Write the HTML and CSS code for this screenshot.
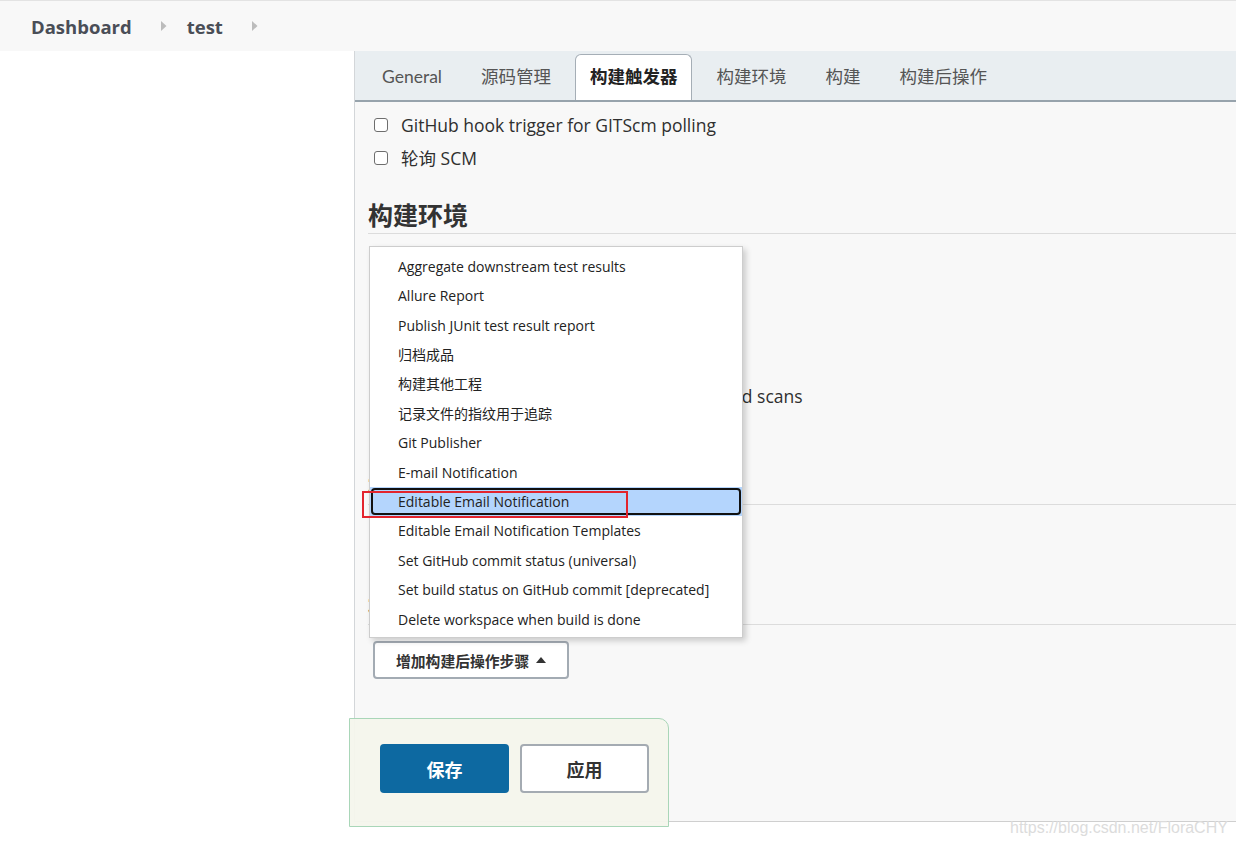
FILE: index.html
```html
<!DOCTYPE html>
<html lang="zh-CN">
<head>
  <meta charset="UTF-8">
  <meta name="viewport" content="width=device-width, initial-scale=1.0">
  <title>test Config [Jenkins]</title>
  <link rel="stylesheet" href="styles.css">
</head>
<body>
  <header class="breadcrumbs">
    <a class="crumb" href="#">Dashboard</a>
    <span class="crumb-arrow"><svg width="6" height="10" viewBox="0 0 6 10"><path d="M0 0 L5.5 5 L0 10 Z" fill="#bcbcbc"/></svg></span>
    <a class="crumb" href="#">test</a>
    <span class="crumb-arrow"><svg width="6" height="10" viewBox="0 0 6 10"><path d="M0 0 L5.5 5 L0 10 Z" fill="#bcbcbc"/></svg></span>
  </header>

  <div class="page">
    <aside class="side-panel"></aside>

    <main class="config-panel">
      <nav class="tabs">
        <a class="tab" href="#">General</a>
        <a class="tab" href="#">源码管理</a>
        <a class="tab active" href="#">构建触发器</a>
        <a class="tab" href="#">构建环境</a>
        <a class="tab" href="#">构建</a>
        <a class="tab" href="#">构建后操作</a>
      </nav>

      <div class="config-body">
        <!-- 构建触发器 -->
        <div class="option-row"><input type="checkbox"><label>GitHub hook trigger for GITScm polling</label></div>
        <div class="option-row"><input type="checkbox"><label>轮询 SCM</label></div>

        <section class="section">
          <h2 class="section-title">构建环境</h2>
          <div class="options">
            <div class="option-row"><input type="checkbox"><label>Delete workspace before build starts</label></div>
            <div class="option-row"><input type="checkbox"><label>Use secret text(s) or file(s)</label></div>
            <div class="option-row"><input type="checkbox"><label>Abort the build if it's stuck</label></div>
            <div class="option-row"><input type="checkbox"><label>Add timestamps to the Console Output</label></div>
            <div class="option-row"><input type="checkbox"><label>Inspect build log for published Gradle build scans</label></div>
            <div class="option-row"><input type="checkbox"><label>With Ant</label></div>
          </div>
        </section>

        <section class="section">
          <h2 class="section-title">构建</h2>
          <div class="dropdown">
            <button class="add-step" type="button">增加构建步骤
              <svg width="10" height="6" viewBox="0 0 10 6"><path d="M0 0 L10 0 L5 6 Z" fill="#333"/></svg>
            </button>
          </div>
        </section>

        <section class="section">
          <h2 class="section-title">构建后操作</h2>
          <div class="dropdown">
            <ul class="dropdown-menu">
              <li>Aggregate downstream test results</li>
              <li>Allure Report</li>
              <li>Publish JUnit test result report</li>
              <li>归档成品</li>
              <li>构建其他工程</li>
              <li>记录文件的指纹用于追踪</li>
              <li>Git Publisher</li>
              <li>E-mail Notification</li>
              <li class="selected">Editable Email Notification</li>
              <li>Editable Email Notification Templates</li>
              <li>Set GitHub commit status (universal)</li>
              <li>Set build status on GitHub commit [deprecated]</li>
              <li>Delete workspace when build is done</li>
              <span class="mark"></span>
            </ul>
            <button class="add-step" type="button">增加构建后操作步骤
              <svg width="10" height="6" viewBox="0 0 10 6"><path d="M5 0 L10 6 L0 6 Z" fill="#333"/></svg>
            </button>
          </div>
        </section>
      </div>

      <div class="bottom-sticker">
        <button class="btn btn-primary" type="button">保存</button>
        <button class="btn btn-secondary" type="button">应用</button>
      </div>
    </main>
  </div>

  <div class="watermark">https://blog.csdn.net/FloraCHY</div>
</body>
</html>
```

FILE: styles.css
```css
* {
  margin: 0;
  padding: 0;
  box-sizing: border-box;
}

body {
  font-family: "Open Sans", "Noto Sans CJK SC", sans-serif;
  background: #fff;
  color: #333;
  position: relative;
  height: 846px;
  overflow: hidden;
}

/* breadcrumb bar */
.breadcrumbs {
  height: 51px;
  border-top: 1px solid #e3e3e3;
  background: #f8f8f8;
  display: flex;
  align-items: center;
  padding-left: 31px;
}

.crumb {
  font-size: 18.5px;
  font-weight: 700;
  color: #4a4e57;
  text-decoration: none;
  margin-right: 29px;
}

.crumb-arrow {
  display: flex;
  margin-right: 20px;
}

/* layout */
.page {
  display: flex;
}

.side-panel {
  width: 354px;
  flex-shrink: 0;
}

.config-panel {
  flex: 1;
  position: relative;
  height: 771px;
  background: #f8f8f8;
  border-left: 1px solid #d3d6d9;
  border-bottom: 1px solid #cfcfcf;
}

/* tabs */
.tabs {
  height: 51px;
  background: #e9eef1;
  border-bottom: 2px solid #97a3ac;
  display: flex;
  align-items: flex-end;
  gap: 9px;
  padding-left: 12px;
}

.tab {
  height: 46px;
  line-height: 44px;
  padding: 0 14px;
  font-family: "Lato", "Noto Sans CJK SC", sans-serif;
  font-size: 17.5px;
  color: #555;
  text-decoration: none;
  border: 1px solid transparent;
  border-bottom: none;
}

.tab.active {
  background: #fff;
  border-color: #a5aeb6;
  border-radius: 6px 6px 0 0;
  font-weight: 700;
  color: #222;
}

/* form body */
.config-body {
  padding: 6px 0 0 13px;
}

.option-row {
  height: 33px;
  display: flex;
  align-items: center;
  font-size: 17.5px;
  color: #2f2f2f;
}

.option-row input {
  appearance: none;
  width: 14px;
  height: 14px;
  margin: 0 13px 0 6px;
  border: 1px solid #6e6e6e;
  border-radius: 3px;
  background: #fff;
}

.section {
  margin-top: 26px;
}

.section-title {
  font-size: 25px;
  font-weight: 700;
  line-height: 30px;
  padding-bottom: 3px;
  border-bottom: 1px solid #dcdcdc;
  color: #333;
}

.options {
  margin-top: 13px;
}

/* dropdown + its button */
.dropdown {
  position: relative;
  display: inline-block;
  margin: 16px 0 6px 5px;
}

.add-step {
  display: inline-flex;
  align-items: center;
  gap: 7px;
  height: 38px;
  padding: 0 21px;
  background: #fff;
  border: 2px solid #a3abb3;
  border-radius: 4px;
  font-family: "Open Sans", "Noto Sans CJK SC", sans-serif;
  font-size: 14.8px;
  font-weight: 600;
  color: #333;
}

.dropdown-menu {
  position: absolute;
  left: -4px;
  bottom: calc(100% + 3px);
  width: 374px;
  list-style: none;
  background: #fff;
  border: 1px solid #cdcdcd;
  box-shadow: 3px 3px 6px rgba(0, 0, 0, 0.18);
  padding: 5px 0 3px;
  z-index: 5;
}

.dropdown-menu li {
  position: relative;
  line-height: 29.4px;
  padding-left: 28px;
  font-size: 14px;
  color: #222;
  white-space: nowrap;
}

.dropdown-menu li.selected {
  background: #b4d5fd;
}

.dropdown-menu li.selected::after {
  content: "";
  position: absolute;
  top: 1px;
  left: 1px;
  right: 1px;
  bottom: 1px;
  border: 2px solid #111;
  border-radius: 4px;
}

/* red annotation box from the screenshot */
.mark {
  position: absolute;
  left: -8px;
  top: 244px;
  width: 266px;
  height: 27px;
  border: 2px solid #e3242d;
}

/* save / apply bar */
.bottom-sticker {
  position: absolute;
  left: -6px;
  bottom: -6px;
  width: 320px;
  height: 109px;
  background: rgba(244, 245, 236, 0.95);
  border: 1px solid #a9d6b8;
  border-radius: 0 10px 0 0;
  display: flex;
  gap: 11px;
  padding: 25px 0 0 30px;
}

.btn {
  width: 129px;
  height: 49px;
  border-radius: 4px;
  font-family: "Open Sans", "Noto Sans CJK SC", sans-serif;
  font-size: 18px;
  font-weight: 700;
}

.btn-primary {
  background: #0d69a1;
  color: #fff;
  border: none;
}

.btn-secondary {
  background: #fff;
  color: #333;
  border: 2px solid #a4abb2;
}

.watermark {
  position: absolute;
  left: 1010px;
  top: 819px;
  font-family: "Liberation Sans", Arial, sans-serif;
  font-size: 16px;
  color: #dcdcdc;
}
```
